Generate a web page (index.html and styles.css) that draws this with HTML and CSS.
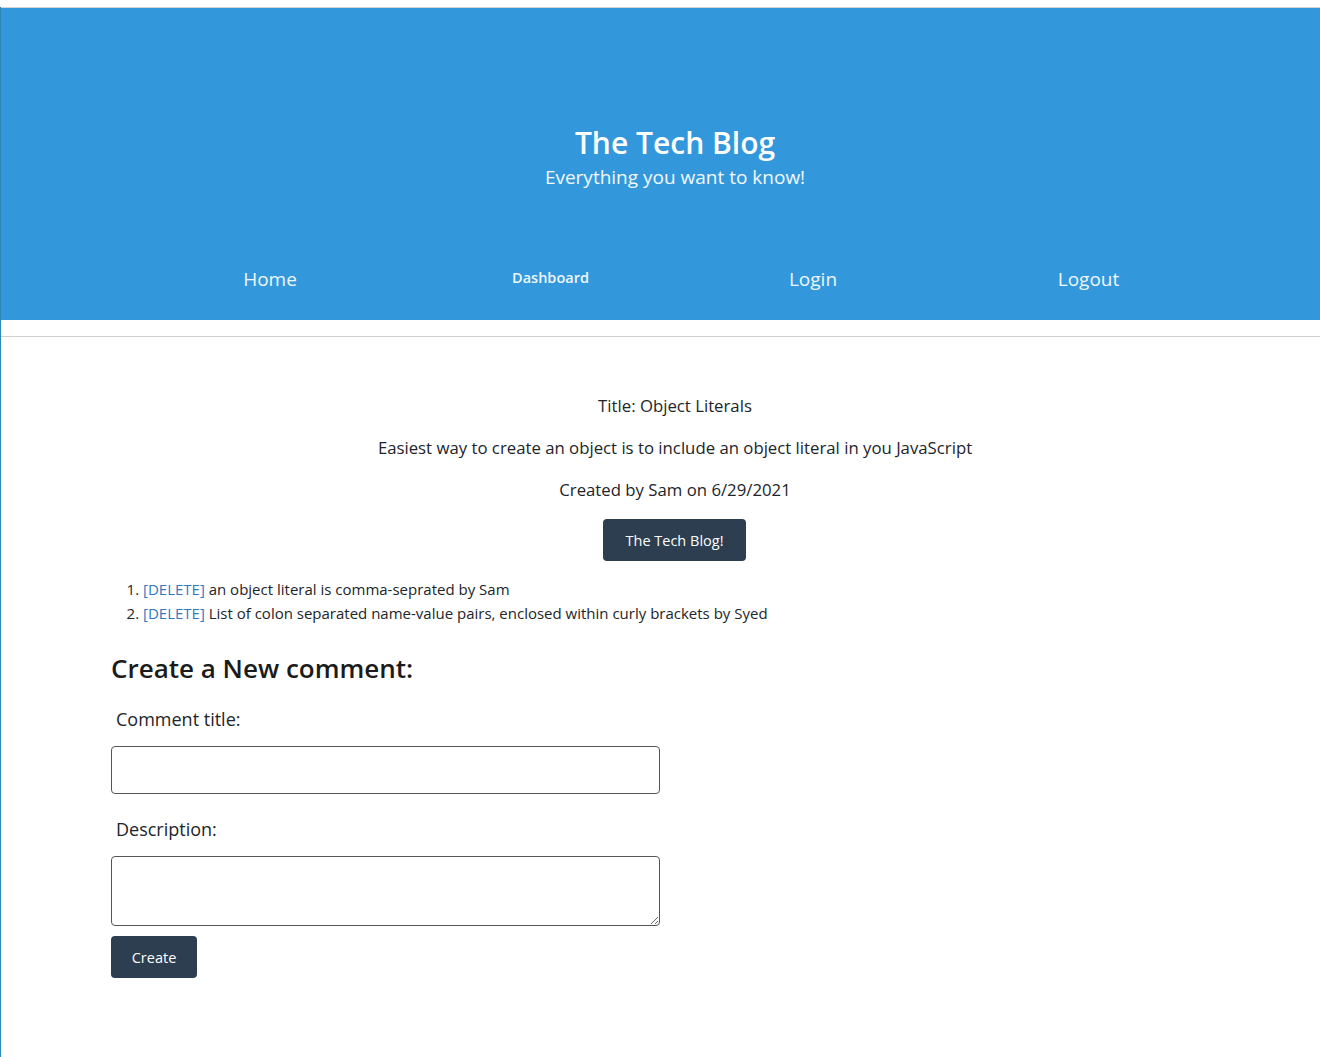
FILE: index.html
```html
<!DOCTYPE html>
<html lang="en">
<head>
<meta charset="utf-8">
<title>The Tech Blog</title>
<link rel="stylesheet" href="styles.css">
</head>
<body>
<div class="page">
  <header class="hero">
    <h1 class="hero-title">The Tech Blog</h1>
    <p class="hero-sub">Everything you want to know!</p>
    <nav class="nav">
      <a class="nav-link" href="#">Home</a>
      <a class="nav-link nav-small" href="#">Dashboard</a>
      <a class="nav-link" href="#">Login</a>
      <a class="nav-link" href="#">Logout</a>
    </nav>
  </header>
  <hr class="rule">
  <main class="container">
    <section class="post">
      <p class="post-line">Title: Object Literals</p>
      <p class="post-line">Easiest way to create an object is to include an object literal in you JavaScript</p>
      <p class="post-line">Created by Sam on 6/29/2021</p>
      <button class="btn btn-center" type="button">The Tech Blog!</button>
    </section>
    <ol class="comments">
      <li><a class="del" href="#">[DELETE]</a> an object literal is comma-seprated by Sam</li>
      <li><a class="del" href="#">[DELETE]</a> List of colon separated name-value pairs, enclosed within curly brackets by Syed</li>
    </ol>
    <form class="form">
      <h2 class="form-title">Create a New comment:</h2>
      <label class="form-label" for="ctitle">Comment title:</label>
      <input class="field field-line" id="ctitle" type="text">
      <label class="form-label" for="cdesc">Description:</label>
      <textarea class="field area" id="cdesc"></textarea>
      <button class="btn btn-create" type="button">Create</button>
    </form>
  </main>
</div>
</body>
</html>
```
FILE: styles.css
```css
html, body {
  margin: 0;
  padding: 0;
  overflow-x: hidden;
  background: #fff;
}
body {
  font-family: "Open Sans", "Noto Sans", sans-serif;
  color: #212529;
  padding-top: 7px;
}
.page {
  width: 1348px;
  border-left: 1px solid #2a88b4;
  min-height: 1050px;
}
.hero {
  background: #3398db;
  border-top: 1px solid #d2d2d2;
  height: 312px;
  box-sizing: content-box;
  display: flex;
  flex-direction: column;
  align-items: center;
  color: #fff;
}
.hero-title {
  margin: 115px 0 0;
  font-size: 30px;
  line-height: 40px;
  font-weight: 600;
}
.hero-sub {
  margin: 0;
  font-size: 19px;
  line-height: 28px;
  color: #f2f8fd;
}
.nav {
  margin-top: 74px;
  align-self: stretch;
  display: grid;
  grid-template-columns: 280px 281px 244px 307px;
  padding-left: 129px;
}
.nav-link {
  text-align: center;
  color: #eef6fc;
  text-decoration: none;
  font-size: 19px;
  line-height: 28px;
}
.nav-small {
  font-size: 14.5px;
  font-weight: 600;
  line-height: 26px;
}
.rule {
  margin: 16px 0 0;
  border: 0;
  border-top: 1px solid #cfcfcf;
  height: 0;
}
.container {
  width: 1128px;
  margin: 0 auto;
  padding-top: 55px;
}
.post {
  text-align: center;
}
.post-line {
  margin: 0 0 15px;
  font-size: 16.75px;
  line-height: 27px;
}
.btn {
  background: #2c3e50;
  color: #fff;
  border: 0;
  border-radius: 4px;
  font-family: inherit;
  font-size: 14.5px;
  height: 42px;
  padding: 0 20px;
  cursor: pointer;
}
.btn-center {
  margin-top: 1px;
  margin-left: -1px;
  width: 143px;
}
.comments {
  margin: 16px 0 0;
  padding-left: 32px;
  font-size: 15px;
  line-height: 24px;
}
.del {
  color: #3279bf;
  text-decoration: none;
}
.form {
  display: flex;
  flex-direction: column;
  align-items: flex-start;
}
.form-title {
  margin: 25px 0 0;
  font-size: 26px;
  line-height: 36px;
  font-weight: 600;
  color: #1b1b1b;
}
.form-label {
  margin: 20px 0 0 5px;
  font-size: 18px;
  line-height: 26px;
}
.field {
  box-sizing: border-box;
  width: 549px;
  height: 48px;
  margin-top: 14px;
  border: 1px solid #555;
  border-radius: 4px;
  font-family: inherit;
  font-size: 16px;
  padding: 6px 10px;
}
.field-line {
  margin-bottom: 2px;
}
.area {
  height: 70px;
  resize: vertical;
}
.btn-create {
  margin-top: 10px;
  width: 86px;
  padding: 0;
}
```
